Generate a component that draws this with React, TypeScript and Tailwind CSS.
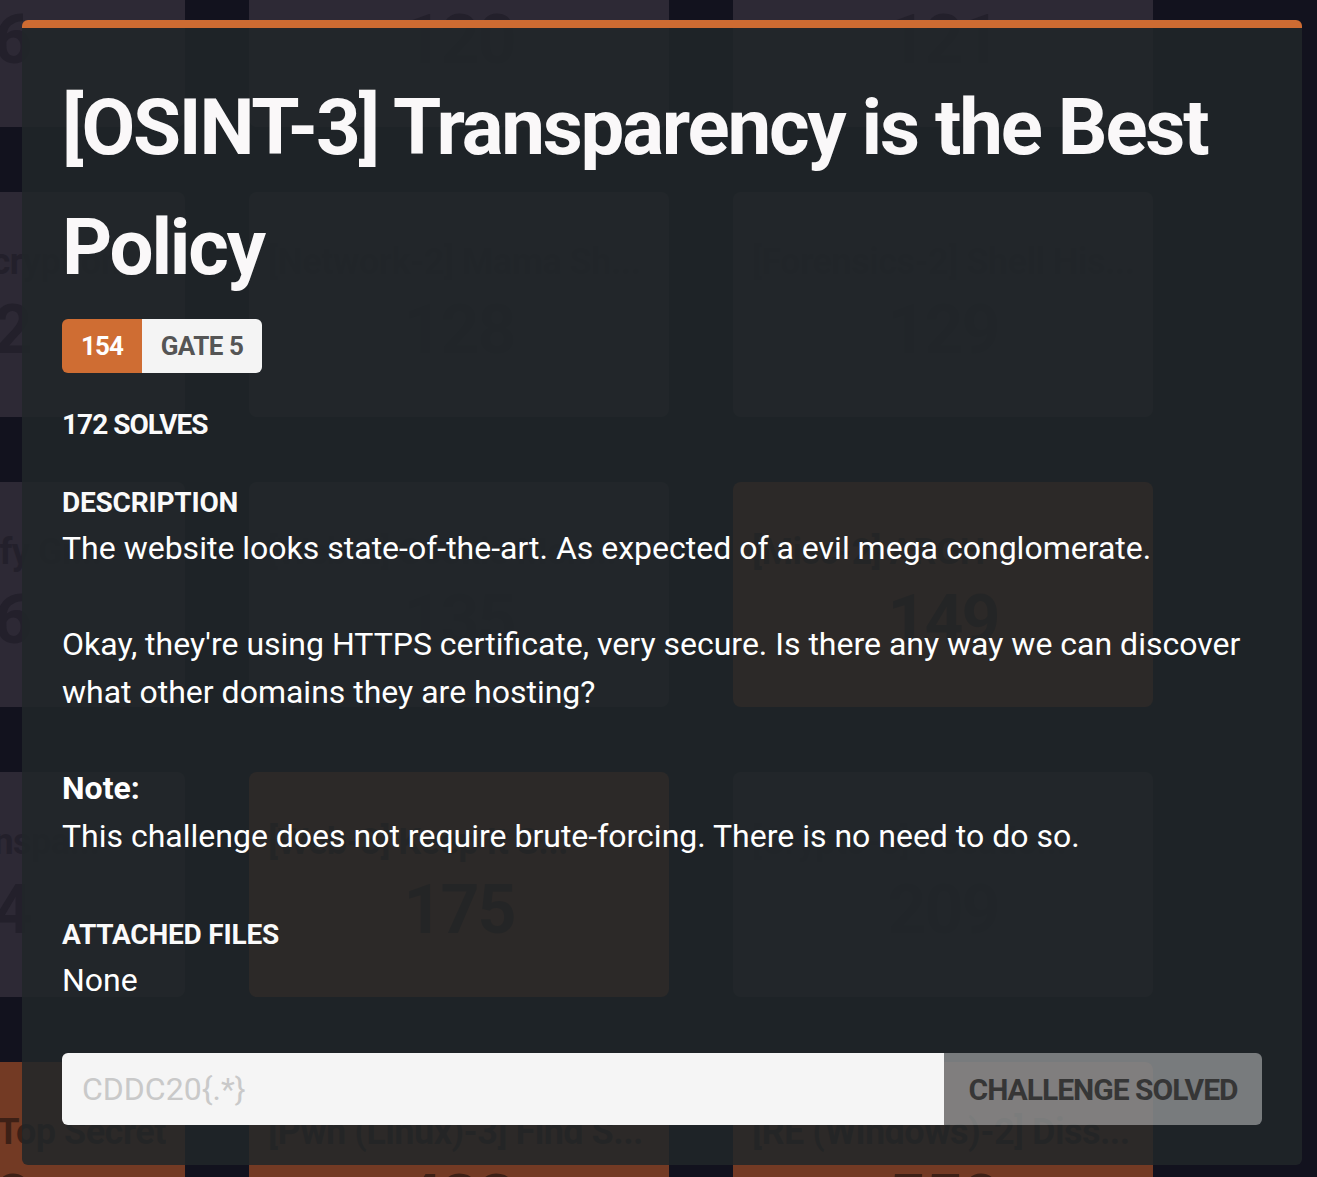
type Card = { title: string; points: string; solved?: boolean }

const rows: Card[][] = [
  [
    { title: "[Crypto-1] Warm Up", points: "116" },
    { title: "[Web-1] Login Portal", points: "120" },
    { title: "[Misc-1] Sanity Check", points: "121" },
  ],
  [
    { title: "[Crypto-2] Decryption...", points: "112" },
    { title: "[Network-2] Mama Sh...", points: "128" },
    { title: "[Forensics-2] Shell His...", points: "129" },
  ],
  [
    { title: "[Misc-2] Justify Gr...", points: "156" },
    { title: "[Web-2] Cookie Mon...", points: "135" },
    { title: "[Misc-2] ARGH", points: "149", solved: true },
  ],
  [
    { title: "[OSINT-3] Transpa...", points: "154" },
    { title: "[Web-3] Keep It S...", points: "175", solved: true },
    { title: "[Crypto-3] Pseudo...", points: "209" },
  ],
  [
    { title: "[Forensics-3] Top Secret", points: "500", solved: true },
    { title: "[Pwn (Linux)-3] Find S...", points: "433", solved: true },
    { title: "[RE (Windows)-2] Diss...", points: "550", solved: true },
  ],
]

const heading = "font-['Roboto',sans-serif] font-bold"

function ChallengeCard({ card }: { card: Card }) {
  return (
    <div
      className={`flex h-[225px] flex-col rounded-lg px-[19px] ${heading} ${
        card.solved ? "bg-[#733a24] text-[#3d2016]" : "bg-[#2d2935] text-[#23202b]"
      }`}
    >
      <div className="mt-[50px] overflow-hidden whitespace-nowrap text-[36px] leading-[40px] tracking-[-0.5px]">
        {card.title}
      </div>
      <div className="mt-[14px] text-center text-[68px] leading-[68px] tracking-[-2px]">
        {card.points}
      </div>
    </div>
  )
}

export default function App() {
  return (
    <div className="relative h-[1177px] w-[1317px] overflow-hidden bg-[#12121e]">
      {/* Tabuleiro de desafios ao fundo */}
      <div className="ml-[-235px] mt-[-98px] grid grid-cols-[repeat(3,420px)] gap-x-[64px] gap-y-[65px]">
        {rows.flat().map((card) => (
          <ChallengeCard key={card.points} card={card} />
        ))}
      </div>

      {/* Modal do desafio */}
      <div className="absolute left-[22px] top-[20px] w-[1280px] rounded-md border-t-8 border-[#cd6b32] bg-[rgba(33,38,41,0.86)] px-10 pb-10 pt-10 text-[#fafafa]">
        <h1 className={`${heading} text-[78px] leading-[120px] tracking-[-2.2px] text-[#faf8f9]`}>
          [OSINT-3] Transparency is the Best Policy
        </h1>

        <div className={`mt-[11px] flex h-[54px] w-fit overflow-hidden rounded-md ${heading} text-[26px]`}>
          <span className="flex w-[80px] items-center justify-center bg-[#cf6d33] tracking-[-1px] text-white">
            154
          </span>
          <span className="flex w-[120px] items-center justify-center bg-[#f4f4f4] tracking-[-0.5px] text-[#555555]">
            GATE 5
          </span>
        </div>

        <div className={`mt-[31px] ${heading} text-[28px] leading-[42px] tracking-[-1px]`}>
          172 SOLVES
        </div>

        <div className={`mt-[36px] ${heading} text-[28px] leading-[42px] tracking-[-0.2px]`}>
          DESCRIPTION
        </div>
        <div className="font-['Roboto',sans-serif] text-[32px] leading-[48px] text-white">
          <p>The website looks state-of-the-art. As expected of a evil mega conglomerate.</p>
          <p className="mt-12">
            Okay, they're using HTTPS certificate, very secure. Is there any way we can discover
            what other domains they are hosting?
          </p>
          <p className="mt-12 font-bold">Note:</p>
          <p>This challenge does not require brute-forcing. There is no need to do so.</p>
        </div>

        <div className={`mt-[54px] ${heading} text-[28px] leading-[42px] tracking-[-0.2px]`}>
          ATTACHED FILES
        </div>
        <div className="font-['Roboto',sans-serif] text-[32px] leading-[48px] text-white">None</div>

        <div className="mt-[49px] flex h-[72px]">
          <input
            type="text"
            placeholder="CDDC20{.*}"
            className="h-full min-w-0 flex-1 rounded-l-md bg-[#f5f5f5] px-5 font-['Roboto',sans-serif] text-[32px] text-[#333] outline-none placeholder:text-[#c9c9c9]"
          />
          <button
            type="button"
            disabled
            className={`w-[318px] rounded-r-md bg-white/40 ${heading} text-[30px] tracking-[-1px] text-[#363636]`}
          >
            CHALLENGE SOLVED
          </button>
        </div>
      </div>
    </div>
  )
}
